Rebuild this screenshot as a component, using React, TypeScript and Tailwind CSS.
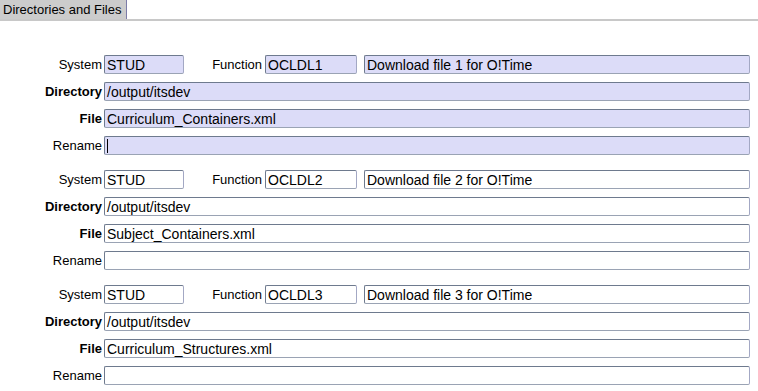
import React from 'react';

type Group = {
    system: string;
    func: string;
    desc: string;
    dir: string;
    file: string;
    rename: string;
    current?: boolean;
};

const groups: Group[] = [
    { system: 'STUD', func: 'OCLDL1', desc: 'Download file 1 for O!Time', dir: '/output/itsdev', file: 'Curriculum_Containers.xml', rename: '', current: true },
    { system: 'STUD', func: 'OCLDL2', desc: 'Download file 2 for O!Time', dir: '/output/itsdev', file: 'Subject_Containers.xml', rename: '' },
    { system: 'STUD', func: 'OCLDL3', desc: 'Download file 3 for O!Time', dir: '/output/itsdev', file: 'Curriculum_Structures.xml', rename: '' },
];

// inset field, lavender when the record is current
const Field = ({ value, current, caret, className }: { value: string; current?: boolean; caret?: boolean; className: string }) => (
    <div
        className={
            'h-[19px] flex items-center pl-[2px] text-[14px] rounded-[2px] border border-t-[#6e7a8e] border-l-[#6e7a8e] border-b-[#9aa3b4] border-r-[#a3a8c4] whitespace-nowrap overflow-hidden ' +
            (current ? 'bg-[#dcdcf8] ' : 'bg-white ') +
            className
        }
    >
        {caret && <span className="inline-block w-[1px] h-[14px] bg-black" />}
        {value}
    </div>
);

const Label = ({ text, bold }: { text: string; bold?: boolean }) => (
    <div className={'w-[104px] pr-[2px] text-right shrink-0 ' + (bold ? 'font-bold' : '')}>{text}</div>
);

const RecordGroup = ({ g }: { g: Group }) => (
    <div className="flex flex-col gap-[8px]">
        <div className="flex items-center">
            <Label text="System" />
            <Field value={g.system} current={g.current} className="w-[80px]" />
            <div className="w-[81px] pr-[3px] text-right">Function</div>
            <Field value={g.func} current={g.current} className="w-[92px]" />
            <Field value={g.desc} current={g.current} className="ml-[7px] w-[386px]" />
        </div>
        <div className="flex items-center">
            <Label text="Directory" bold />
            <Field value={g.dir} current={g.current} className="w-[646px]" />
        </div>
        <div className="flex items-center">
            <Label text="File" bold />
            <Field value={g.file} current={g.current} className="w-[646px]" />
        </div>
        <div className="flex items-center">
            <Label text="Rename" />
            <Field value={g.rename} current={g.current} caret={g.current} className="w-[646px]" />
        </div>
    </div>
);

export default function App() {
    return (
        <div className="w-[758px] h-[391px] bg-white overflow-hidden text-[13px] leading-none text-black font-['Liberation_Sans',Arial,sans-serif]">
            {/* tab strip */}
            <div className="flex items-end h-[21px] border-b-2 border-[#c8c8c8]">
                <div className="h-[19px] w-[127px] bg-[#cccccc] pl-[3px] flex items-center border-r border-r-[#7c7ca8]">
                    Directories and Files
                </div>
            </div>
            <div className="pt-[34px] flex flex-col gap-[15px]">
                {groups.map(g => (
                    <RecordGroup key={g.func} g={g} />
                ))}
            </div>
        </div>
    );
}
